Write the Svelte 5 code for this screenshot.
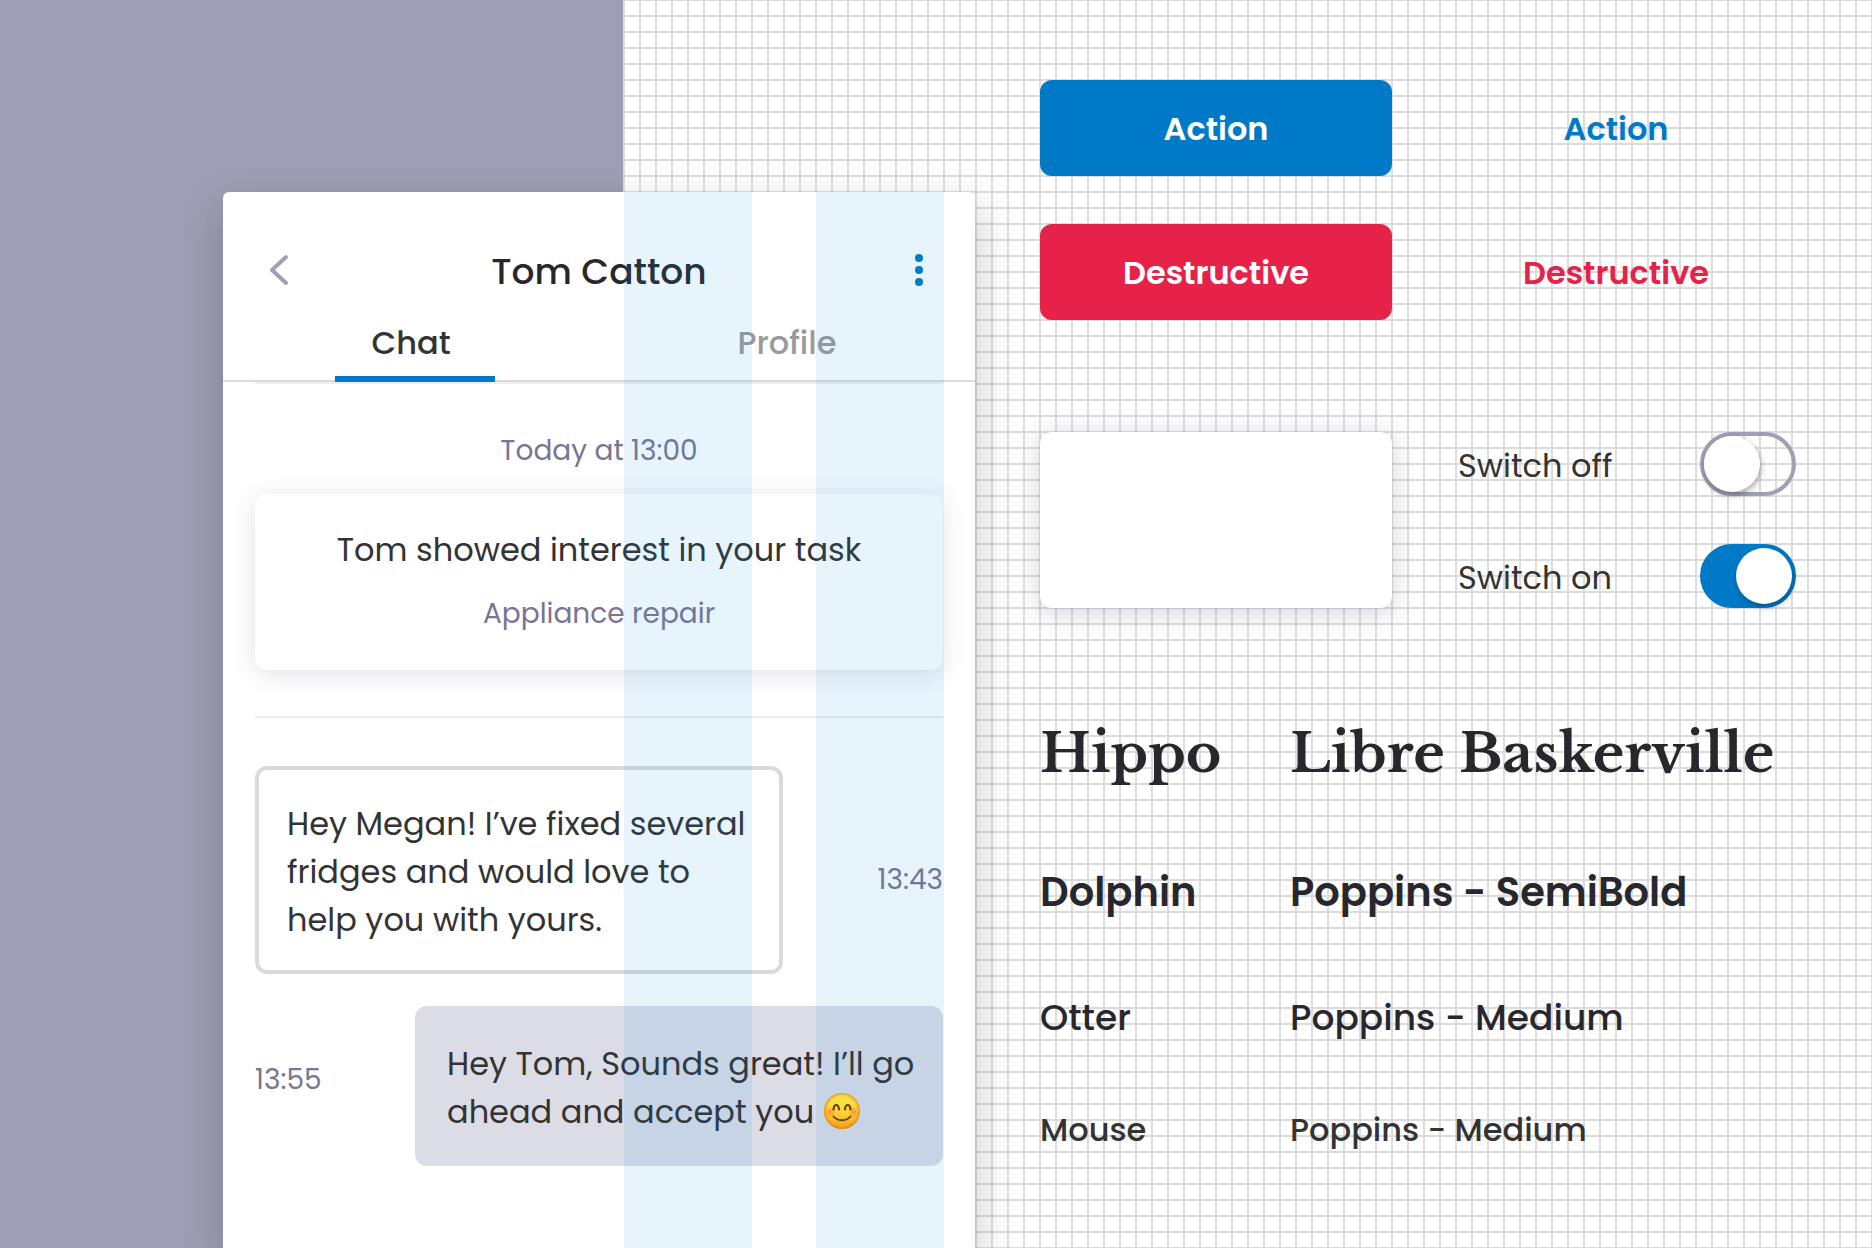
<script>
  let activeTab = $state('chat');
  let switches = $state([
    { id: 'switch-off', label: 'Switch off', on: false },
    { id: 'switch-on', label: 'Switch on', on: true }
  ]);

  const tabs = [
    { id: 'chat', label: 'Chat' },
    { id: 'profile', label: 'Profile' }
  ];

  const styles = [
    { name: 'Hippo', spec: 'Libre Baskerville' },
    { name: 'Dolphin', spec: 'Poppins - SemiBold' },
    { name: 'Otter', spec: 'Poppins - Medium' },
    { name: 'Mouse', spec: 'Poppins - Medium' }
  ];
</script>

<main class="page">
  <section class="phone">
    <header class="bar">
      <button class="icon" aria-label="Back">
        <svg width="24" height="36" viewBox="0 0 24 36" fill="none" stroke="#9f9fb5" stroke-width="4" stroke-linecap="round" stroke-linejoin="round">
          <path d="M19 5 L5 18 L19 31" />
        </svg>
      </button>
      <h1>Tom Catton</h1>
      <button class="icon" aria-label="More">
        <svg width="24" height="36" viewBox="0 0 24 36" fill="#007ac7">
          <circle cx="12" cy="6" r="4" />
          <circle cx="12" cy="18" r="4" />
          <circle cx="12" cy="30" r="4" />
        </svg>
      </button>
    </header>

    <div class="tabs" role="tablist">
      {#each tabs as tab (tab.id)}
        <button
          class="tab"
          class:active={activeTab === tab.id}
          role="tab"
          aria-selected={activeTab === tab.id}
          onclick={() => (activeTab = tab.id)}>{tab.label}</button>
      {/each}
    </div>

    <div class="thread">
      <p class="stamp">Today at 13:00</p>
      <article class="notice">
        <p class="lead">Tom showed interest in your task</p>
        <p class="sub">Appliance repair</p>
      </article>
      <hr />
      <div class="row received">
        <p class="bubble">Hey Megan! I’ve fixed several<br />fridges and would love to<br />help you with yours.</p>
        <time>13:43</time>
      </div>
      <div class="row sent">
        <time>13:55</time>
        <p class="bubble">
          Hey Tom, Sounds great! I’ll go<br />ahead and accept you
          <svg class="emoji" width="38" height="38" viewBox="0 0 38 38" role="img" aria-label="Smiling face">
            <defs>
              <linearGradient id="face" x1="0" y1="0" x2="0" y2="1">
                <stop offset="0" stop-color="#fbe84c" />
                <stop offset="0.55" stop-color="#fbd338" />
                <stop offset="1" stop-color="#f09a1c" />
              </linearGradient>
              <radialGradient id="rim" cx="0.5" cy="0.5" r="0.5">
                <stop offset="0.8" stop-color="#e8921b" stop-opacity="0" />
                <stop offset="1" stop-color="#d87b12" stop-opacity="0.75" />
              </radialGradient>
              <radialGradient id="blush">
                <stop offset="0" stop-color="#f4632a" stop-opacity="0.55" />
                <stop offset="1" stop-color="#f4632a" stop-opacity="0" />
              </radialGradient>
            </defs>
            <circle cx="19" cy="19" r="18" fill="url(#face)" />
            <circle cx="19" cy="19" r="18" fill="url(#rim)" />
            <circle cx="7" cy="20" r="6" fill="url(#blush)" />
            <circle cx="31" cy="20" r="6" fill="url(#blush)" />
            <g fill="none" stroke="#6b3f10" stroke-linecap="round">
              <path d="M10.500 17.500 C11 11.500 15.500 11.500 16 17.500" stroke-width="2.200" />
              <path d="M22 17.500 C22.500 11.500 27 11.500 27.500 17.500" stroke-width="2.200" />
              <path d="M10.500 24.500 C14.500 29.500 23.500 29.500 27.500 24.500" stroke-width="1.800" />
            </g>
          </svg>
        </p>
      </div>
    </div>
    <div class="columns" aria-hidden="true"><span></span><span></span></div>
  </section>

  <section class="kit">
    <div class="buttons">
      <button class="btn action">Action</button>
      <button class="btn ghost-action">Action</button>
      <button class="btn destructive">Destructive</button>
      <button class="btn ghost-destructive">Destructive</button>
    </div>

    <div class="surfaces">
      <div class="blank"></div>
      <div class="switches">
        {#each switches as item (item.id)}
          <div class="switch">
            <label for={item.id}>{item.label}</label>
            <input id={item.id} type="checkbox" role="switch" bind:checked={item.on} />
          </div>
        {/each}
      </div>
    </div>

    <dl class="type">
      {#each styles as style (style.name)}
        <div class="style {style.name.toLowerCase()}">
          <dt>{style.name}</dt>
          <dd>{style.spec}</dd>
        </div>
      {/each}
    </dl>
  </section>
</main>

<style>
  :global(body) {
    margin: 0;
  }

  .page {
    --ink: #333333;
    --dark: #28272e;
    --muted: #7a7594;
    --blue: #007ac7;
    --red: #e62249;
    --lilac: #9f9fb5;
    box-sizing: border-box;
    min-height: 100vh;
    display: grid;
    grid-template-columns: minmax(0, 223fr) minmax(0, 752fr) minmax(0, 897fr);
    overflow: hidden;
    font-family: Poppins, Inter, sans-serif;
    font-size: 32px;
    line-height: 48px;
    color: var(--ink);
    background-color: #ffffff;
    background-image:
      linear-gradient(#9e9fb4, #9e9fb4),
      linear-gradient(#dcdcdc 2px, transparent 2px),
      linear-gradient(90deg, #dcdcdc 2px, transparent 2px);
    background-size: 33.3% 100%, 16px 16px, 16px 16px;
    background-position: 0 0, -1px -1px, -1px -1px;
    background-repeat: no-repeat, repeat, repeat;
  }

  h1,
  p,
  dl,
  dd {
    margin: 0;
    font-weight: inherit;
  }

  button {
    padding: 0;
    border: 0;
    background: none;
    font: inherit;
    color: inherit;
    cursor: pointer;
  }

  .phone {
    grid-column: 2;
    position: relative;
    margin-top: 192px;
    background: #ffffff;
    border-radius: 6px 6px 0 0;
    box-shadow: 0 16px 40px rgba(38, 32, 46, 0.26);
  }

  .bar {
    display: flex;
    align-items: flex-start;
    justify-content: space-between;
    padding: 56px 44px 0;
  }

  .bar h1 {
    font-size: 36px;
    font-weight: 500;
    color: var(--dark);
  }

  .icon {
    display: flex;
    align-items: center;
    height: 44px;
  }

  .tabs {
    display: grid;
    grid-template-columns: 1fr 1fr;
    padding-top: 16px;
    border-bottom: 2px solid #dbdbdb;
  }

  .tab {
    position: relative;
    height: 68px;
    padding-bottom: 6px;
    font-weight: 500;
    color: #9a9a9a;
  }

  .tab.active {
    color: var(--ink);
  }

  .tab.active::after {
    content: "";
    position: absolute;
    left: 112px;
    bottom: -2px;
    width: 160px;
    height: 6px;
    background: var(--blue);
  }

  .thread {
    margin: 0 32px;
    padding-bottom: 80px;
    border-top: 2px solid #efefef;
  }

  .stamp,
  .sub,
  time {
    font-size: 28px;
    color: var(--muted);
  }

  .stamp {
    padding: 43px 0 19px;
    text-align: center;
  }

  .notice {
    padding: 32px 0;
    border-radius: 12px;
    background: #ffffff;
    box-shadow: 0 4px 24px rgba(60, 56, 90, 0.14);
    text-align: center;
  }

  .sub {
    padding-top: 16px;
  }

  hr {
    height: 2px;
    margin: 46px 0 48px;
    border: 0;
    background: #ededed;
  }

  .row {
    display: grid;
    align-items: center;
  }

  .received {
    grid-template-columns: 33fr 10fr;
  }

  .sent {
    grid-template-columns: 10fr 33fr;
    margin-top: 32px;
  }

  .bubble {
    box-sizing: border-box;
    padding: 34px 0 30px 32px;
    border-radius: 12px;
    white-space: nowrap;
  }

  .received .bubble {
    padding: 30px 0 26px 28px;
    border: 4px solid #dadada;
  }

  .sent .bubble {
    background: #dcdce6;
  }

  .received time {
    padding-top: 20px;
    text-align: right;
  }

  .sent time {
    padding-bottom: 12px;
  }

  .emoji {
    position: relative;
    z-index: 1;
    vertical-align: -7px;
  }

  .columns {
    position: absolute;
    inset: 0 31px 0 53.3%;
    display: grid;
    grid-template-columns: 1fr 1fr;
    gap: 64px;
    pointer-events: none;
  }

  .columns span {
    background: rgba(15, 145, 225, 0.1);
  }

  .kit {
    grid-column: 3;
    padding: 80px 76px 80px 65px;
  }

  .buttons,
  .surfaces {
    display: grid;
    grid-template-columns: 352fr 356fr;
    gap: 48px;
  }

  .buttons {
    grid-template-columns: 1fr 1fr;
    padding-right: 4px;
  }

  .btn {
    height: 96px;
    padding-top: 2px;
    border-radius: 12px;
    font-weight: 600;
  }

  .action {
    background: var(--blue);
    color: #ffffff;
  }

  .destructive {
    background: var(--red);
    color: #ffffff;
  }

  .ghost-action {
    color: var(--blue);
  }

  .ghost-destructive {
    color: var(--red);
  }

  .surfaces {
    margin-top: 112px;
  }

  .blank {
    border-radius: 12px;
    background: #ffffff;
    box-shadow: 0 4px 24px rgba(60, 56, 110, 0.24);
  }

  .switches {
    display: grid;
    gap: 48px;
    padding-left: 18px;
  }

  .switch {
    display: flex;
    align-items: center;
    justify-content: space-between;
  }

  .switch label {
    padding-top: 4px;
  }

  .switch input {
    appearance: none;
    box-sizing: border-box;
    width: 96px;
    height: 64px;
    margin: 0;
    border: 4px solid var(--lilac);
    border-radius: 32px;
    cursor: pointer;
  }

  .switch input::before {
    content: "";
    display: block;
    width: 56px;
    height: 56px;
    border-radius: 50%;
    background: #ffffff;
    box-shadow: 1px 3px 6px rgba(20, 16, 40, 0.35);
  }

  .switch input:checked {
    border-color: var(--blue);
    background: var(--blue);
  }

  .switch input:checked::before {
    margin-left: 32px;
  }

  .type {
    margin-top: 112px;
    color: var(--dark);
  }

  .style {
    display: grid;
    grid-template-columns: 250fr 506fr;
    white-space: nowrap;
  }

  .hippo {
    font-family: "Libre Baskerville", "Liberation Serif", serif;
    font-size: 54px;
    font-weight: 700;
    line-height: 68px;
  }

  .dolphin {
    margin-top: 80px;
    font-size: 40px;
    font-weight: 600;
  }

  .otter {
    margin-top: 78px;
    font-size: 36px;
    font-weight: 500;
  }

  .mouse {
    margin-top: 64px;
    font-weight: 500;
    color: var(--ink);
  }
</style>
